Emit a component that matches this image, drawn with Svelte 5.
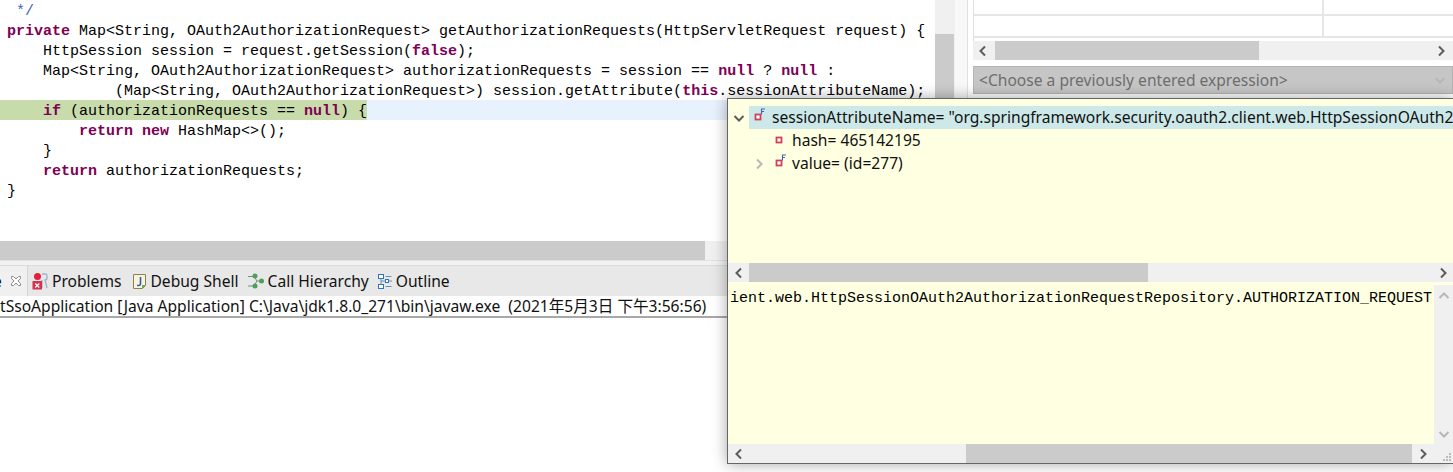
<script>
	const kw = (t) => ({ t, k: 1 });

	const code = [
		[{ t: " ", c: 1 }, { t: "*/", c: 1 }],
		[kw("private"), " Map<String, OAuth2AuthorizationRequest> getAuthorizationRequests(HttpServletRequest request) {"],
		["    HttpSession session = request.getSession(", kw("false"), ");"],
		["    Map<String, OAuth2AuthorizationRequest> authorizationRequests = session == ", kw("null"), " ? ", kw("null"), " :"],
		["            (Map<String, OAuth2AuthorizationRequest>) session.getAttribute(", kw("this"), ".sessionAttributeName);"],
		null,
		["        ", kw("return"), " ", kw("new"), " HashMap<>();"],
		["    }"],
		["    ", kw("return"), " authorizationRequests;"],
		["}"],
	];

	const tabs = ["Problems", "Debug Shell", "Call Hierarchy", "Outline"];
</script>

{#snippet chevron(dir, light = false)}
	<svg class="chevron" class:light width="12" height="12" viewBox="0 0 12 12">
		{#if dir === "left"}
			<path d="M8 1.500 3.500 6 8 10.500" />
		{:else if dir === "right"}
			<path d="M4 1.500 8.500 6 4 10.500" />
		{:else if dir === "up"}
			<path d="M1.500 8 6 3.500 10.500 8" />
		{:else}
			<path d="M1.500 4 6 8.500 10.500 4" />
		{/if}
	</svg>
{/snippet}

{#snippet fieldIcon(final)}
	<svg class="field" width="16" height="16" viewBox="0 0 16 16">
		<rect x="2.500" y="6.500" width="5" height="5" fill="#fff" stroke="#d0405a" stroke-width="1.800" />
		{#if final}
			<path d="M8.500 6.500V1h3.500M8.500 3.500h2.500" fill="none" stroke="#3f66b0" stroke-width="1.100" />
		{/if}
	</svg>
{/snippet}

<div class="screen">
	<div class="left">
		<div class="editor-row">
			<div class="editor">
				{#each code as line}
					{#if line}
						<div class="line">{#each line as part}{#if typeof part === "string"}{part}{:else if part.k}<b>{part.t}</b>{:else}<span class="comment">{part.t}</span>{/if}{/each}</div>
					{:else}
						<div class="line current"><span class="hit">{"    "}<b>if</b> (authorizationRequests == <b>null</b>) &#123;</span></div>
					{/if}
				{/each}
			</div>
			<div class="vscroll"><div class="vthumb"></div></div>
			<div class="gutter"></div>
		</div>
		<div class="hscroll"><div class="hthumb"></div></div>
		<div class="band"></div>
		<div class="tabbar">
			<div class="tab-on">
				<span class="cut">e</span>
				<svg width="12" height="12" viewBox="0 0 12 12" class="close">
					<path d="M1.500 1.500h2L6 4l2.500-2.500h2v2L8 6l2.500 2.500v2h-2L6 8l-2.500 2.500h-2v-2L4 6 1.500 3.500z" fill="#fff" stroke="#8a8a8a" />
				</svg>
			</div>
			{#each tabs as tab}
				<div class="tab" class:debug={tab === "Debug Shell"}>
					{#if tab === "Problems"}
						<svg width="16" height="18" viewBox="0 0 16 18">
							<path d="M10 2h3.500q1.500 0 1.500 2v2q0 2-2 2l2 8M10 8v8" fill="none" stroke="#9fb0c4" stroke-width="1.300" />
							<circle cx="5.500" cy="4.500" r="3.500" fill="#e0233a" />
							<rect x="0.500" y="9" width="9.500" height="8.500" fill="#d8324a" />
							<path d="M3.200 11.500 7.300 15.500M7.300 11.500 3.200 15.500" stroke="#fff" stroke-width="1.200" />
						</svg>
					{:else if tab === "Debug Shell"}
						<svg width="13" height="16" viewBox="0 0 13 16">
							<path d="M.5 1.500h12v11l-3 3H.5z" fill="#f7f3dc" stroke="#8c8250" />
							<path d="M7.500 4v6.500q0 2-2 2H4" fill="none" stroke="#2f62a8" stroke-width="1.600" />
							<path d="M9 15.500l3.500-3.500H9z" fill="#6aa84f" />
						</svg>
					{:else if tab === "Call Hierarchy"}
						<svg width="16" height="16" viewBox="0 0 16 16">
							<path d="M0 3.500h6l3 4.500h4M0 13h6l3-5" fill="none" stroke="#7d8a8a" />
							<circle cx="7" cy="3" r="2.500" fill="#4e9e5c" />
							<circle cx="13.500" cy="8" r="2.500" fill="#4e9e5c" />
							<circle cx="7" cy="13" r="2.500" fill="#4e9e5c" />
						</svg>
					{:else}
						<svg width="14" height="15" viewBox="0 0 14 15">
							<g fill="#fff" stroke="#2f74c0">
								<rect x=".5" y=".5" width="5" height="4" />
								<rect x=".5" y="10.500" width="5" height="4" />
								<rect x="7.500" y="5.500" width="3" height="3" />
							</g>
							<path d="M3 4.500v6M3 7h4.500M7.500 2.500h6M11 7h3M7.500 12.500h6" fill="none" stroke="#6a8fb5" />
						</svg>
					{/if}
					<span>{tab}</span>
				</div>
			{/each}
		</div>
		<div class="console-title">tSsoApplication [Java Application] C:\Java\jdk1.8.0_271\bin\javaw.exe&nbsp; (2021年5月3日 下午3:56:56)</div>
	</div>

	<div class="right">
		<div class="table">
			<div class="row first"><div></div><div></div></div>
			<div class="row"><div></div><div></div></div>
		</div>
		<div class="right-scroll">
			{@render chevron("left")}
			<div class="right-thumb"></div>
			{@render chevron("right")}
		</div>
		<div class="combo">
			<span>&lt;Choose a previously entered expression&gt;</span>
			{@render chevron("down", true)}
		</div>
	</div>

	<div class="popup">
		<div class="tree">
			<div class="node selected">
				<span class="twist">{@render chevron("down")}</span>
				<div class="node-label">
					{@render fieldIcon(true)}
					<span>sessionAttributeName= "org.springframework.security.oauth2.client.web.HttpSessionOAuth2</span>
				</div>
			</div>
			<div class="node child">
				<span class="twist"></span>
				<div class="node-label">
					{@render fieldIcon(false)}
					<span>hash= 465142195</span>
				</div>
			</div>
			<div class="node child">
				<span class="twist">{@render chevron("right", true)}</span>
				<div class="node-label">
					{@render fieldIcon(true)}
					<span>value= (id=277)</span>
				</div>
			</div>
		</div>
		<div class="bar tree-bar">
			<span class="arrow">{@render chevron("left")}</span>
			<div class="bar-track"><div class="tree-thumb"></div></div>
			<span class="arrow">{@render chevron("right")}</span>
		</div>
		<div class="detail-wrap">
			<div class="detail">ient.web.HttpSessionOAuth2AuthorizationRequestRepository.AUTHORIZATION_REQUEST</div>
			<div class="detail-scroll">
				{@render chevron("up", true)}
				{@render chevron("down", true)}
			</div>
		</div>
		<div class="bar detail-bar">
			<span class="arrow">{@render chevron("left")}</span>
			<div class="bar-track"><div class="detail-thumb"></div></div>
			<span class="arrow">{@render chevron("right")}</span>
			<svg class="grip" width="12" height="12" viewBox="0 0 12 12">
				<path d="M8 2h2v2H8zM5 5h2v2H5zM8 5h2v2H8zM2 8h2v2H2zM5 8h2v2H5zM8 8h2v2H8z" fill="#bbb" />
			</svg>
		</div>
	</div>
</div>

<style>
	:global(body) {
		margin: 0;
		background: #fff;
	}

	.screen {
		position: relative;
		display: grid;
		grid-template-columns: 973px 480px;
		width: 1453px;
		height: 472px;
		overflow: hidden;
		font-family: "Noto Sans", "Noto Sans CJK SC", sans-serif;
		font-size: 15.6px;
		color: #111;
	}

	.editor-row {
		display: flex;
		height: 241px;
	}

	.editor {
		flex: none;
		width: 935px;
		overflow: hidden;
		font-family: "Liberation Mono", monospace;
		font-size: 15px;
		line-height: 24px;
		white-space: pre;
		color: #000;
	}

	.line {
		height: 20px;
		padding-left: 7px;
	}

	.line b {
		color: #7f0055;
	}

	.comment {
		color: #3f5fbf;
	}

	.current {
		background: #e8f2fe;
	}

	.hit {
		display: inline-block;
		height: 20px;
		vertical-align: top;
		margin-left: -7px;
		padding-left: 7px;
		background: #c7dbab;
	}

	.vscroll {
		flex: none;
		width: 20px;
		padding-top: 34px;
		box-sizing: border-box;
		background: #f0f0f0;
	}

	.vthumb {
		width: 19px;
		height: 100%;
		background: #cbcbcb;
	}

	.gutter {
		flex: none;
		width: 13px;
		background: #f8f8f8;
		border-right: 1px solid #e0e0e0;
		box-sizing: border-box;
	}

	.hscroll {
		height: 19px;
		background: #f0f0f0;
	}

	.hthumb {
		width: 705px;
		height: 100%;
		background: #cbcbcb;
	}

	.band {
		height: 6px;
		background: #f2f2f2;
		border-top: 1px solid #e2e2e2;
		border-bottom: 1px solid #dcdcdc;
		box-sizing: border-box;
	}

	.tabbar {
		display: flex;
		align-items: center;
		gap: 9px;
		height: 30px;
		background: #e8e8e8;
	}

	.tab-on {
		display: flex;
		align-items: center;
		gap: 8px;
		width: 28px;
		height: 100%;
		background: #f0f0f0;
		border-right: 1px solid #d4d4d4;
		box-sizing: border-box;
		margin-right: -5px;
		overflow: hidden;
	}

	.cut {
		margin-left: -7px;
	}

	.close {
		flex: none;
	}

	.tab {
		display: flex;
		align-items: center;
		gap: 4px;
	}

	.tab.debug {
		margin-left: 3px;
	}

	.console-title {
		height: 20px;
		line-height: 20px;
		border-bottom: 2px solid #a8a8a8;
		white-space: nowrap;
		overflow: hidden;
	}

	.table {
		height: 41px;
		border-left: 1px solid #e0e0e0;
	}

	.row {
		display: grid;
		grid-template-columns: 350px 1fr;
		height: 22px;
		border-bottom: 2px solid #e6e6e6;
		box-sizing: border-box;
	}

	.row.first {
		height: 16px;
	}

	.row div:first-child {
		border-right: 2px solid #e6e6e6;
	}

	.right-scroll {
		display: flex;
		align-items: center;
		gap: 6px;
		height: 19px;
		padding: 0 6px 0 4px;
		background: #f0f0f0;
	}

	.right-thumb {
		width: 264px;
		height: 100%;
		margin-right: auto;
		background: #cbcbcb;
	}

	.combo {
		display: flex;
		align-items: center;
		justify-content: space-between;
		height: 28px;
		margin-top: 6px;
		padding: 0 6px 0 5px;
		background: #c6c6c6;
		border: 1px solid #b4b4b4;
		box-sizing: border-box;
		color: #6e6e6e;
	}

	.popup {
		position: absolute;
		left: 727px;
		top: 98px;
		display: flex;
		flex-direction: column;
		width: 726px;
		height: 366px;
		box-sizing: border-box;
		background: #ffffe1;
		border: 1px solid #666;
		border-right: none;
		box-shadow: 0 0 14px rgba(0, 0, 0, 0.35);
		overflow: hidden;
	}

	.tree {
		flex: none;
		height: 164px;
		padding-top: 7px;
		box-sizing: border-box;
		white-space: nowrap;
	}

	.node {
		display: flex;
		align-items: center;
		height: 23px;
	}

	.twist {
		display: flex;
		justify-content: center;
		flex: none;
		width: 21px;
	}

	.node-label {
		display: flex;
		align-items: center;
		gap: 3px;
		flex: 1;
		min-width: 0;
		height: 100%;
		padding-left: 4px;
		line-height: 21px;
	}

	.selected .node-label {
		background: #cde8e8;
	}

	.child .twist {
		margin-left: 20px;
	}

	.child .node-label {
		gap: 2px;
		padding-left: 5px;
	}

	.field {
		flex: none;
		margin-top: -4px;
	}

	.bar {
		flex: none;
		display: flex;
		align-items: center;
		height: 19px;
		background: #f0f0f0;
	}

	.arrow {
		display: flex;
		justify-content: center;
		flex: none;
		width: 21px;
	}

	.bar-track {
		flex: 1;
		height: 100%;
	}

	.tree-thumb {
		width: 399px;
		height: 100%;
		background: #cbcbcb;
	}

	.detail-thumb {
		width: 446px;
		height: 100%;
		margin-left: 217px;
		background: #cbcbcb;
	}

	.detail-bar .bar-track {
		flex: none;
		width: 663px;
	}

	.grip {
		margin-left: 8px;
		margin-top: 6px;
	}

	.detail-wrap {
		flex: 1;
		display: flex;
		margin-top: 3px;
		min-height: 0;
	}

	.detail {
		flex: 1;
		padding: 2px 0 0 2px;
		font-family: "Liberation Mono", monospace;
		font-size: 15px;
		line-height: 24px;
		white-space: pre;
		color: #000;
	}

	.detail-scroll {
		flex: none;
		display: flex;
		flex-direction: column;
		align-items: center;
		justify-content: space-between;
		width: 19px;
		padding: 5px 0 4px;
		box-sizing: border-box;
		background: #f0f0f0;
	}

	.chevron {
		flex: none;
	}

	.chevron path {
		fill: none;
		stroke: #5c5c5c;
		stroke-width: 2;
	}

	.chevron.light path {
		stroke: #b8b8b8;
	}
</style>
